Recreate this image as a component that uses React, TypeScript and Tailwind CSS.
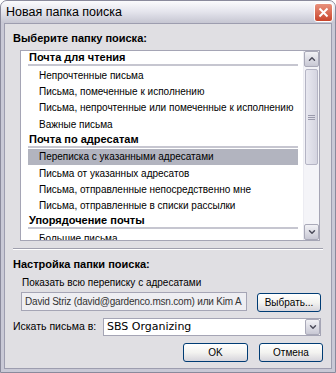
import { ChevronDown, ChevronUp } from "lucide-react"

const groups = [
  {
    title: "Почта для чтения",
    items: [
      "Непрочтенные письма",
      "Письма, помеченные к исполнению",
      "Письма, непрочтенные или помеченные к исполнению",
      "Важные письма",
    ],
  },
  {
    title: "Почта по адресатам",
    items: [
      "Переписка с указанными адресатами",
      "Письма от указанных адресатов",
      "Письма, отправленные непосредственно мне",
      "Письма, отправленные в списки рассылки",
    ],
  },
  {
    title: "Упорядочение почты",
    items: ["Большие письма", "Старые письма"],
  },
]

const selected = "Переписка с указанными адресатами"

function XpButton({ label, className = "" }: { label: string; className?: string }) {
  return (
    <button
      className={`h-[19px] rounded-[3px] border border-[#003c74] bg-gradient-to-b from-white via-[#f3f3f0] to-[#d6d5dc] text-[10px] leading-none text-black ${className}`}
    >
      {label}
    </button>
  )
}

function ArrowBox({ down }: { down?: boolean }) {
  return (
    <div className="w-[15px] h-[16px] flex items-center justify-center rounded-[2px] border border-[#a9a9b8] bg-gradient-to-b from-[#f2f2f6] to-[#c8c8d4]">
      {down ? (
        <ChevronDown size={10} strokeWidth={3.5} className="text-[#4d4d5c]" />
      ) : (
        <ChevronUp size={10} strokeWidth={3.5} className="text-[#4d4d5c]" />
      )}
    </div>
  )
}

export default function App() {
  return (
    <div className="w-[336px] h-[373px] flex flex-col bg-[#c9c9d6] rounded-t-[7px] overflow-hidden font-['Liberation_Sans',Arial,sans-serif] text-[11px] text-black border border-[#8a8a9c]">
      {/* title bar */}
      <div className="h-[22px] shrink-0 flex items-center justify-between pl-[5px] pr-[2px] bg-gradient-to-b from-[#fbfbfd] via-[#e4e4ec] to-[#c6c6d2]">
        <span className="text-[12.5px] leading-none">Новая папка поиска</span>
        <div className="w-[19px] h-[19px] rounded-[3px] border border-white bg-gradient-to-b from-[#e8907c] to-[#c8432a] flex items-center justify-center">
          <svg width="11" height="11" viewBox="0 0 11 11">
            <path d="M1.5 1.5L9.5 9.5M9.5 1.5L1.5 9.5" stroke="white" strokeWidth="2" />
          </svg>
        </div>
      </div>

      {/* body */}
      <div className="flex-1 mx-[3px] mb-[3px] border border-[#9d9daf] bg-[#e0dfe3] flex flex-col px-[8px]">
        <div className="mt-[8px] h-[13px] font-bold leading-[13px]">Выберите папку поиска:</div>

        {/* list box */}
        <div className="mt-[5px] ml-[7px] w-[300px] h-[191px] shrink-0 border border-[#a5a5b5] bg-white flex">
          <div className="flex-1 overflow-hidden">
            {groups.map((g) => (
              <div key={g.title}>
                <div className="ml-[7px] mr-[5px] h-[12px] font-bold leading-[12px] pl-[1px]">{g.title}</div>
                <div className="ml-[7px] mr-[5px] mt-[1px] h-[2px] bg-[#c6c6d0]" />
                <div className="pt-[1px]">
                  {g.items.map((it) => (
                    <div
                      key={it}
                      className={`h-[16.4px] flex items-center pl-[11px] ml-[7px] mr-[5px] whitespace-nowrap text-[10px] ${
                        it === selected ? "bg-[#b2b4bf]" : ""
                      }`}
                    >
                      {it}
                    </div>
                  ))}
                </div>
              </div>
            ))}
          </div>
          {/* scrollbar */}
          <div className="w-[16px] flex flex-col bg-[#f4f4f8] border-l border-[#ececf2]">
            <ArrowBox />
            <div className="flex-1 relative">
              <div className="absolute left-[1px] right-[1px] top-[2px] h-[96px] rounded-[2px] border border-[#b4b4c4] bg-gradient-to-r from-[#e8e8f0] to-[#d4d4e0] flex flex-col items-center justify-center gap-[1px]">
                <div className="w-[7px] h-px bg-[#9a9aac]" />
                <div className="w-[7px] h-px bg-[#9a9aac]" />
                <div className="w-[7px] h-px bg-[#9a9aac]" />
              </div>
            </div>
            <ArrowBox down />
          </div>
        </div>

        {/* separator */}
        <div className="mt-[7px] h-[2px] shrink-0 border-t border-[#a0a0ae] border-b border-b-white" />

        <div className="mt-[8px] h-[13px] font-bold leading-[13px]">Настройка папки поиска:</div>
        <div className="mt-[5px] ml-[9px] h-[13px] leading-[13px] text-[10px]">Показать всю переписку с адресатами</div>

        <div className="mt-[3px] ml-[8px] flex gap-[10px] items-start">
          <div className="w-[226px] h-[19px] border border-[#a5a5b5] bg-[#eeeef2] flex items-center pl-[3px] overflow-hidden whitespace-nowrap text-[10px] tracking-[-0.2px] text-[#333]">
            David Striz (david@gardenco.msn.com) или Kim A
          </div>
          <XpButton label="Выбрать..." className="w-[64px] mt-[1px]" />
        </div>

        <div className="mt-[6px] flex items-center">
          <span className="w-[90px] text-[10.5px]">Искать письма в:</span>
          <div className="w-[218px] h-[18px] border border-[#a5a5b5] bg-white flex items-center">
            <span className="flex-1 pl-[3px] font-['DejaVu_Sans',sans-serif] text-[11px]">SBS Organizing</span>
            <ArrowBox down />
          </div>
        </div>

        <div className="mt-[7px] flex justify-end gap-[11px]">
          <XpButton label="OK" className="w-[65px]" />
          <XpButton label="Отмена" className="w-[64px]" />
        </div>
      </div>
    </div>
  )
}
